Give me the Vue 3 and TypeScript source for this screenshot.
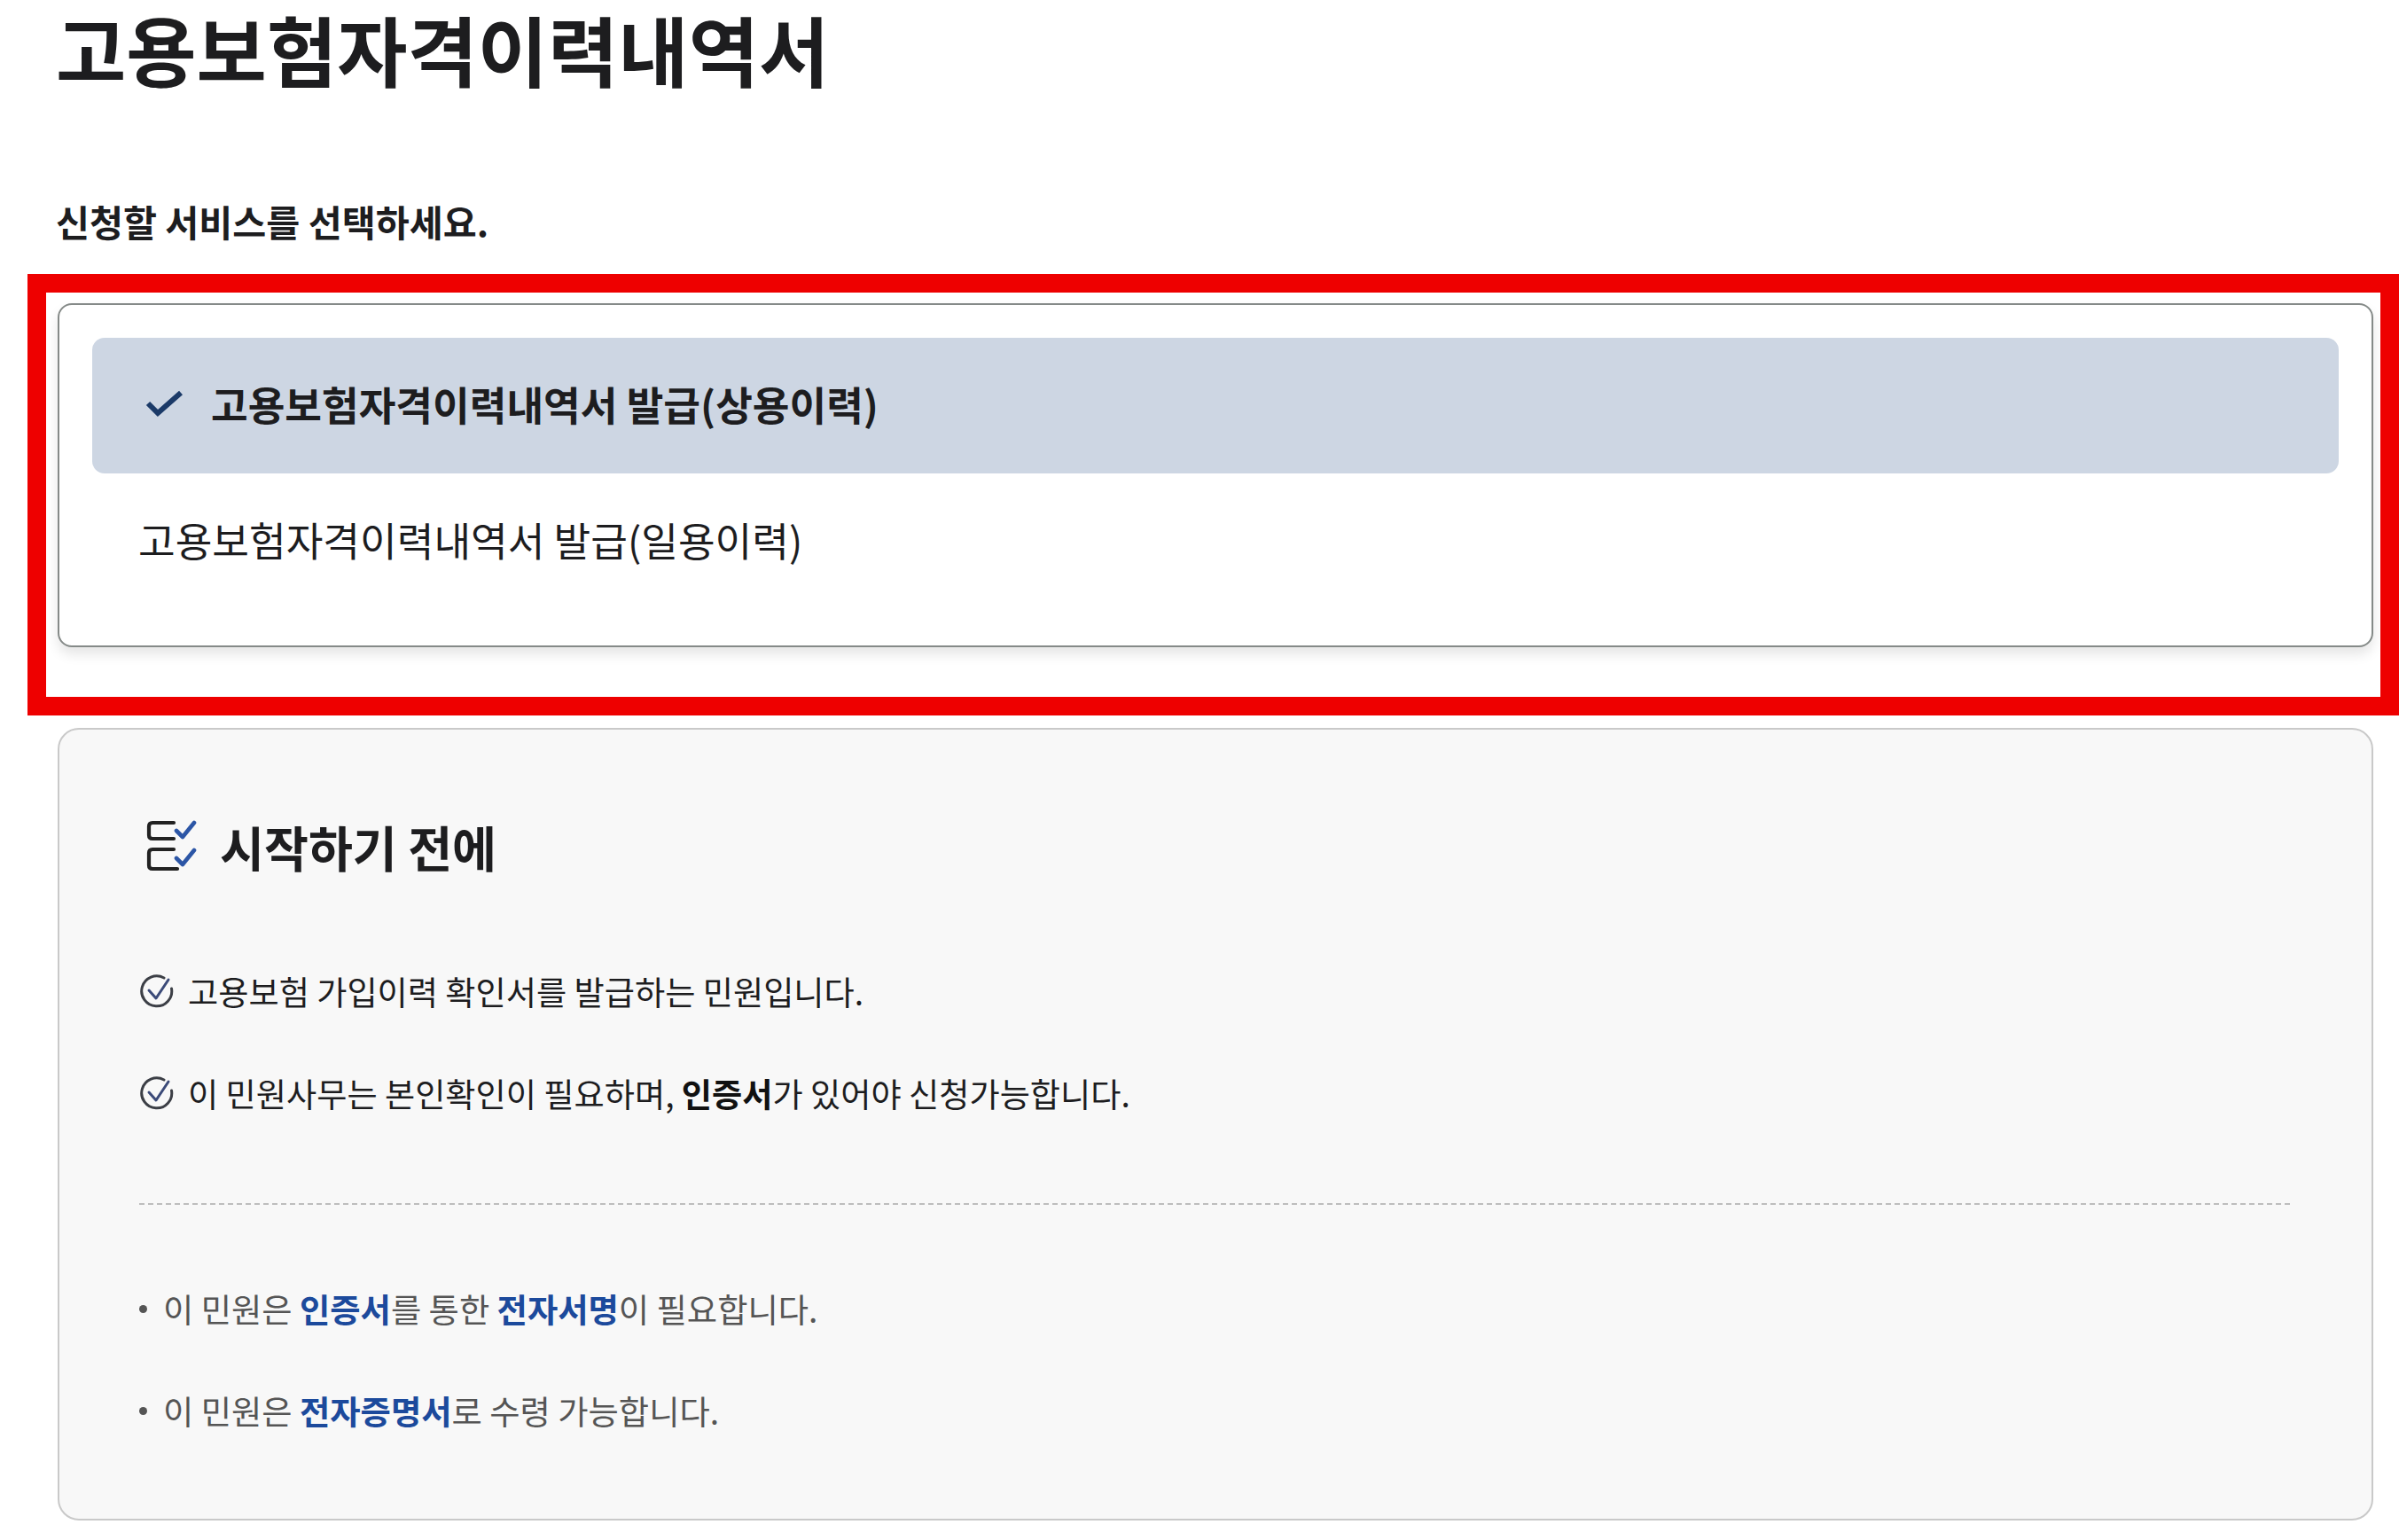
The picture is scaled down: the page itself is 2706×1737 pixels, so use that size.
<script setup lang="ts">
interface Service { label: string; selected: boolean }
const services: Service[] = [
  { label: '고용보험자격이력내역서 발급(상용이력)', selected: true },
  { label: '고용보험자격이력내역서 발급(일용이력)', selected: false },
]
</script>

<template>
  <main class="page">
    <h1 class="title">고용보험자격이력내역서</h1>
    <p class="lead">신청할 서비스를 선택하세요.</p>

    <section class="picker">
      <div class="frame" aria-hidden="true"></div>
      <div
        v-for="s in services"
        :key="s.label"
        class="option"
        :class="{ selected: s.selected }"
      >
        <svg v-if="s.selected" class="tick" viewBox="0 0 44 32" width="44" height="32">
          <path d="M3 16 L14 27 L40 4" fill="none" stroke="#1b3a68" stroke-width="6" />
        </svg>
        <span>{{ s.label }}</span>
      </div>
    </section>

    <section class="info">
      <h2 class="info-title">
        <svg class="list-icon" viewBox="0 0 58 60" width="58" height="60">
          <g fill="none" stroke="#222" stroke-width="4.2" stroke-linecap="round">
            <path d="M32 4 H8 Q4 4 4 8 V18 Q4 22 8 22 H32" />
            <path d="M32 34 H8 Q4 34 4 38 V52 Q4 56 8 56 H36" />
          </g>
          <g fill="none" stroke="#2c56a6" stroke-width="4.6" stroke-linecap="round" stroke-linejoin="round">
            <path d="M35 13 L42 20 L55 4" />
            <path d="M35 44 L42 51 L55 35" />
          </g>
        </svg>
        시작하기 전에
      </h2>

      <ul class="checks">
        <li>
          <svg class="circle" viewBox="0 0 40 40" width="40" height="40">
            <path d="M28 5 A17 17 0 1 0 36.5 17" fill="none" stroke="#3c3f46" stroke-width="3" stroke-linecap="round" />
            <path d="M11 19 L19 28 L33 7" fill="none" stroke="#3b4a78" stroke-width="3" stroke-linecap="round" stroke-linejoin="round" />
          </svg>
          <span>고용보험 가입이력 확인서를 발급하는 민원입니다.</span>
        </li>
        <li>
          <svg class="circle" viewBox="0 0 40 40" width="40" height="40">
            <path d="M28 5 A17 17 0 1 0 36.5 17" fill="none" stroke="#3c3f46" stroke-width="3" stroke-linecap="round" />
            <path d="M11 19 L19 28 L33 7" fill="none" stroke="#3b4a78" stroke-width="3" stroke-linecap="round" stroke-linejoin="round" />
          </svg>
          <span>이 민원사무는 본인확인이 필요하며, <b>인증서</b>가 있어야 신청가능합니다.</span>
        </li>
      </ul>

      <hr class="rule" />

      <ul class="notes">
        <li>이 민원은 <b>인증서</b>를 통한 <b>전자서명</b>이 필요합니다.</li>
        <li>이 민원은 <b>전자증명서</b>로 수령 가능합니다.</li>
      </ul>
    </section>
  </main>
</template>

<style>
html, body { margin: 0; background: #fff; overflow: hidden; }
</style>

<style scoped>
.page {
  width: 2706px;
  height: 1737px;
  box-sizing: border-box;
  padding: 0 29px 0 65px;
  background: #fff;
  font-family: "Noto Sans CJK KR", "Noto Sans", sans-serif;
  color: #1d1d1f;
  overflow: hidden;
}
.title {
  margin: 0 0 0 -2px;
  font-size: 86.2px;
  line-height: 110px;
  font-weight: 700;
}
.lead {
  margin: 116px 0 0 -2px;
  font-size: 41.3px;
  line-height: 46px;
  font-weight: 700;
}
.picker {
  position: relative;
  box-sizing: border-box;
  margin-top: 70px;
  height: 388px;
  padding: 37px 37px 0;
  background: #fff;
  border: 2px solid #858a88;
  border-radius: 16px;
  box-shadow: 0 8px 14px rgba(0, 0, 0, 0.1);
}
.frame {
  position: absolute;
  left: -36px;
  top: -35px;
  width: 2675px;
  height: 498px;
  box-sizing: border-box;
  border: 21px solid #ee0000;
  pointer-events: none;
}
.option {
  display: flex;
  align-items: center;
  box-sizing: border-box;
  height: 153px;
  padding: 0 0 5px 52px;
  font-size: 45.3px;
  border-radius: 14px;
}
.option.selected {
  padding-left: 60px;
  gap: 30px;
  background: #cdd6e3;
  font-weight: 700;
}
.tick { flex: none; }
.info {
  box-sizing: border-box;
  margin-top: 91px;
  height: 894px;
  padding: 99px 92px 0 90px;
  background: #f8f8f8;
  border: 2px solid #c9c9c9;
  border-radius: 24px;
}
.info-title {
  display: flex;
  align-items: center;
  gap: 26px;
  margin: 0 0 0 7px;
  height: 64px;
  font-size: 54.3px;
  font-weight: 700;
}
.list-icon { flex: none; }
.checks, .notes { list-style: none; margin: 0; padding: 0; }
.checks { margin-top: 74px; }
.checks li {
  display: flex;
  align-items: center;
  gap: 15px;
  height: 115px;
  font-size: 37.2px;
}
.circle { flex: none; }
.checks b { font-weight: 700; color: #111; }
.rule {
  margin: 67px 0 0;
  border: 0;
  border-top: 2px dashed #bdbdbd;
}
.notes { margin-top: 60px; color: #555; }
.notes li {
  position: relative;
  height: 115px;
  padding-left: 27px;
  font-size: 37.3px;
  line-height: 114px;
}
.notes li::before {
  content: "";
  position: absolute;
  left: 0;
  top: 53px;
  width: 9px;
  height: 9px;
  border-radius: 50%;
  background: #555;
}
.notes b { font-weight: 700; color: #1c4a9c; }
</style>
